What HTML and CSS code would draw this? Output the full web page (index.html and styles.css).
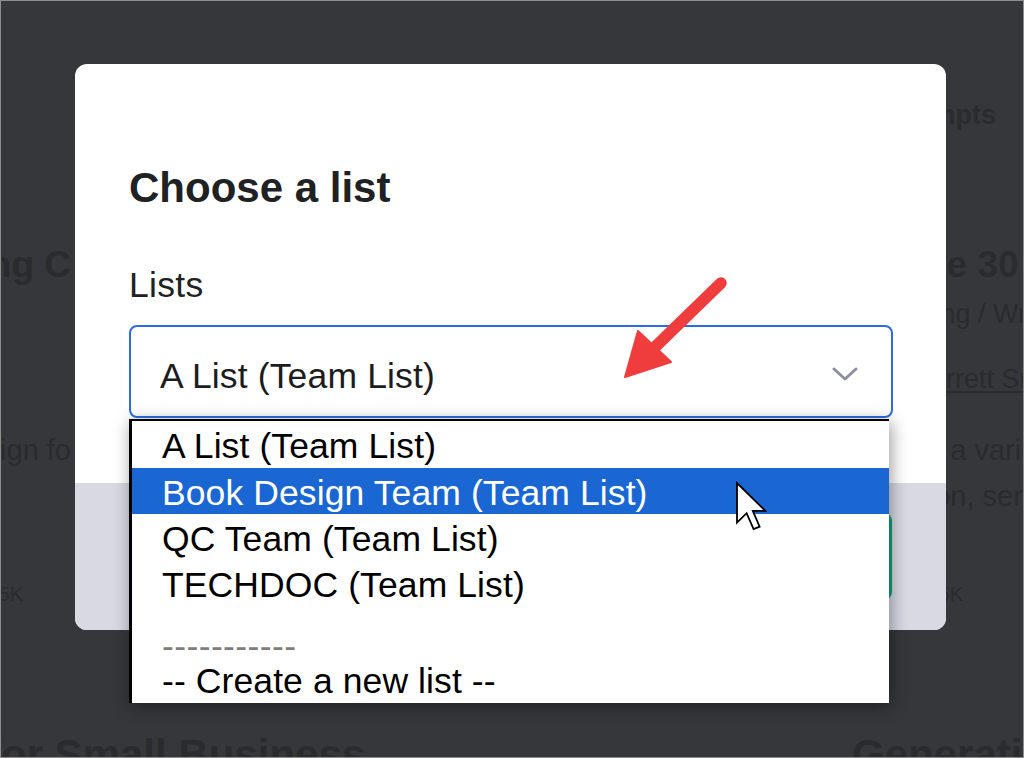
FILE: index.html
```html
<!DOCTYPE html>
<html lang="en">
<head>
<meta charset="utf-8">
<title>Choose a list</title>
<link rel="stylesheet" href="styles.css">
</head>
<body>
<div class="frame">
  <div class="page">
    <div class="bg-grid">
      <div class="cell-left"></div>
      <div class="cell-right"><span class="bg-heading">AI Prompts</span></div>

      <div class="cell-left"><span class="bg-title">Marketing C</span></div>
      <div class="cell-right"><span class="bg-title">Create 30 Blog Posts</span></div>

      <div class="cell-left"></div>
      <div class="cell-right"><span class="bg-meta">Marketing / Writing</span></div>

      <div class="cell-left"></div>
      <div class="cell-right indent-author"><span class="bg-meta bg-link">Garrett Smith</span></div>

      <div class="cell-left"><span class="bg-desc">Book design fo</span></div>
      <div class="cell-right"><span class="bg-desc">Deliver a variety of</span></div>

      <div class="cell-left"></div>
      <div class="cell-right"><span class="bg-desc">selection, services</span></div>

      <div class="cell-left stats-left"><span class="bg-stat">5K</span></div>
      <div class="cell-right indent-stat"><span class="bg-stat">9.5K</span></div>

      <div class="cell-bottom-left"><span class="bg-title-lg">for Small Business</span></div>
      <div class="cell-bottom-right"><span class="bg-title-lg">Generative AI</span></div>
    </div>
  </div>

  <div class="modal">
    <div class="modal-body">
      <h2 class="modal-title">Choose a list</h2>
      <div class="field-label">Lists</div>
      <div class="select">
        <span class="select-value">A List (Team List)</span>
        <svg class="chevron" width="26" height="16" viewBox="0 0 26 16"><path d="M2 3 L13 13 L24 3" fill="none" stroke="#8e8ea0" stroke-width="3" stroke-linecap="round" stroke-linejoin="round"/></svg>
      </div>
    </div>
    <div class="modal-footer">
      <button class="btn btn-secondary">Cancel</button>
      <button class="btn btn-primary">Add</button>
    </div>
  </div>

  <div class="dropdown">
    <div class="option first">A List (Team List)</div>
    <div class="option active">Book Design Team (Team List)</div>
    <div class="option">QC Team (Team List)</div>
    <div class="option">TECHDOC (Team List)</div>
    <div class="sep-gap"></div>
    <div class="option sep">-----------</div>
    <div class="option create">-- Create a new list --</div>
  </div>

  <svg class="annot-arrow" width="120" height="115" viewBox="614 272 120 115">
    <line x1="721" y1="283" x2="652" y2="350" stroke="#ef3d3d" stroke-width="11.5" stroke-linecap="round"/>
    <polygon points="625,377 638,331 671,362" fill="#ef3d3d" stroke="#ef3d3d" stroke-width="2" stroke-linejoin="round"/>
  </svg>

  <svg class="cursor" width="32" height="52" viewBox="735 481 32 52">
    <path d="M737 483 L737 522.6 L746.6 513.2 L753.6 529 L759.6 526.7 L752.8 510.8 L765.3 510.8 Z" fill="#fff" stroke="#000" stroke-width="1.8" stroke-linejoin="miter"/>
  </svg>
</div>
</body>
</html>
```

FILE: styles.css
```css
* {
  box-sizing: border-box;
  margin: 0;
  padding: 0;
}

html, body {
  width: 1024px;
  height: 758px;
  overflow: hidden;
}

body {
  background: #36373a;
  font-family: "Liberation Sans", Arial, sans-serif;
}

.frame {
  position: relative;
  width: 1024px;
  height: 758px;
  border: 1px solid #8f8f8f;
  overflow: hidden;
  background: #36373a;
}

/* ---------- dimmed page behind the modal ---------- */
.page {
  color: #2a2b2e;
  height: 100%;
}

.bg-grid {
  display: grid;
  grid-template-columns: 75px 1fr 171px;
  grid-template-rows: 143px 56px 65px 63px 46px 109px 149px 48px;
  padding-top: 99px;
  align-items: start;
  white-space: nowrap;
}

.cell-left {
  grid-column: 1;
  display: flex;
  justify-content: flex-end;
  padding-right: 5px;
}

.cell-left > span,
.cell-right > span,
.cell-bottom-left > span,
.cell-bottom-right > span {
  flex-shrink: 0;
}

.cell-right {
  grid-column: 3;
  display: flex;
}

.stats-left {
  padding-right: 53px;
}

.indent-author {
  padding-left: 58px;
}

.indent-stat {
  padding-left: 70px;
}

.cell-bottom-left {
  grid-column: 1 / 3;
  margin-left: -14px;
  display: flex;
}

.cell-bottom-right {
  grid-column: 3;
  display: flex;
}

.bg-heading {
  font-size: 27px;
  font-weight: 700;
  line-height: 30px;
}

.bg-title {
  font-size: 37px;
  font-weight: 700;
  line-height: 44px;
}

.bg-title-lg {
  font-size: 42px;
  font-weight: 700;
  line-height: 48px;
}

.bg-meta {
  font-size: 27px;
  line-height: 30px;
}

.bg-link {
  text-decoration: underline;
  text-underline-offset: 3px;
}

.bg-desc {
  font-size: 29px;
  line-height: 46px;
}

.bg-stat {
  font-size: 20px;
  line-height: 24px;
}

/* ---------- modal ---------- */
.modal {
  position: absolute;
  left: 74px;
  top: 63px;
  width: 871px;
  height: 566px;
  border-radius: 12px;
  overflow: hidden;
  background: #ffffff;
  display: flex;
  flex-direction: column;
}

.modal-body {
  flex: 0 0 419px;
  padding: 100px 53px 0 54px;
}

.modal-title {
  font-size: 42px;
  font-weight: 700;
  line-height: 48px;
  color: #202123;
}

.field-label {
  margin-top: 53px;
  font-size: 35.5px;
  letter-spacing: 0.3px;
  line-height: 40px;
  color: #202123;
}

.select {
  margin-top: 20px;
  height: 93px;
  border: 2px solid #2d6ce6;
  border-radius: 8px;
  display: flex;
  align-items: center;
  justify-content: space-between;
  padding: 9px 33px 0 29px;
  font-size: 35.5px;
  letter-spacing: 0.15px;
  line-height: 40px;
  color: #1c1c1e;
}

.chevron {
  display: block;
  flex-shrink: 0;
  margin-top: -5px;
}

.modal-footer {
  flex: 1;
  background: #d9d9e3;
  display: flex;
  justify-content: flex-end;
  align-items: flex-start;
  gap: 16px;
  padding: 30px 54px 0;
}

.btn {
  height: 87px;
  border-radius: 8px;
  border: none;
  font-family: inherit;
  font-size: 30px;
  padding: 0 40px;
}

.btn-secondary {
  background: #ffffff;
  color: #202123;
  border: 1px solid #c5c5d2;
}

.btn-primary {
  background: #10a37f;
  color: #ffffff;
  width: 170px;
}

/* ---------- open native-like dropdown ---------- */
.dropdown {
  position: absolute;
  left: 128px;
  top: 418px;
  width: 760px;
  height: 284px;
  background: #ffffff;
  border-top: 2px solid #000000;
  border-left: 3px solid #000000;
  box-shadow: 2px 3px 16px rgba(0, 0, 0, 0.4);
  font-size: 35.5px;
  letter-spacing: 0.1px;
  color: #000000;
  overflow: hidden;
}

.option {
  height: 46px;
  padding-top: 2px;
  line-height: 46px;
  padding-left: 30px;
  white-space: nowrap;
}

.option.first {
  height: 47px;
  padding-top: 2px;
}

.option.active {
  background: #1a66d3;
  color: #ffffff;
}

.sep-gap {
  height: 23px;
}

.option.sep {
  height: 35px;
  padding-top: 0;
  line-height: 35px;
  color: #7d7d7d;
  letter-spacing: 0.4px;
}

.option.create {
  height: 39px;
  padding-top: 0;
  line-height: 34px;
}

/* ---------- annotations ---------- */
.annot-arrow {
  position: absolute;
  left: 613px;
  top: 271px;
}

.cursor {
  position: absolute;
  left: 734px;
  top: 480px;
}
```
